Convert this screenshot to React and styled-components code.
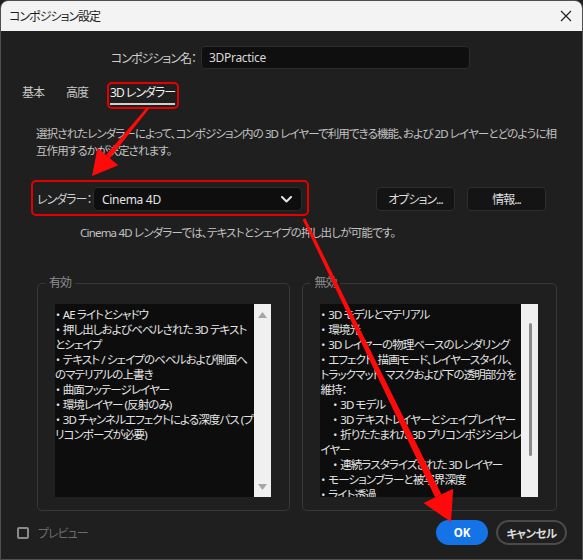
import React from 'react';
import styled, { createGlobalStyle } from 'styled-components';

const GlobalStyle = createGlobalStyle`
  html, body {
    margin: 0;
    padding: 0;
    background: #1f1f1f;
  }
  body {
    font-family: "Noto Sans", "Noto Sans CJK JP", sans-serif;
    font-feature-settings: "palt";
  }
`;

const enabledLines = [
  { text: '・AE ライトとシャドウ' },
  { text: '・押し出しおよびベベルされた 3D テキスト' },
  { text: 'とシェイプ' },
  { text: '・テキスト / シェイプのベベルおよび側面へ' },
  { text: 'のマテリアルの上書き' },
  { text: '・曲面フッテージレイヤー' },
  { text: '・環境レイヤー (反射のみ)' },
  { text: '・3D チャンネルエフェクトによる深度パス (プ' },
  { text: 'リコンポーズが必要)' },
];

const disabledLines = [
  { text: '・3D モデルとマテリアル' },
  { text: '・環境光' },
  { text: '・3D レイヤーの物理ベースのレンダリング' },
  { text: '・エフェクト、描画モード、レイヤースタイル、' },
  { text: 'トラックマット、マスクおよび下の透明部分を' },
  { text: '維持：' },
  { text: '・3D モデル', indent: true },
  { text: '・3D テキストレイヤーとシェイプレイヤー', indent: true },
  { text: '・折りたたまれた 3D プリコンポジションレ', indent: true },
  { text: 'イヤー' },
  { text: '・連続ラスタライズされた 3D レイヤー', indent: true },
  { text: '・モーションブラーと被写界深度' },
  { text: '・ライト透過' },
];

// tapered arrow: thin at the start, wide head at the tip
const arrowPoints = (x1, y1, x2, y2, startW, endW, headLen, headW) => {
  const len = Math.hypot(x2 - x1, y2 - y1);
  const dx = (x2 - x1) / len;
  const dy = (y2 - y1) / len;
  const px = -dy;
  const py = dx;
  const bx = x2 - dx * headLen;
  const by = y2 - dy * headLen;
  const shaft = [
    [x1 + px * startW / 2, y1 + py * startW / 2],
    [bx + px * endW / 2, by + py * endW / 2],
    [bx - px * endW / 2, by - py * endW / 2],
    [x1 - px * startW / 2, y1 - py * startW / 2],
  ];
  const head = [
    [bx + px * headW / 2, by + py * headW / 2],
    [x2, y2],
    [bx - px * headW / 2, by - py * headW / 2],
  ];
  const fmt = (pts) => pts.map(([a, b]) => `${a.toFixed(1)},${b.toFixed(1)}`).join(' ');
  return { shaft: fmt(shaft), head: fmt(head) };
};

const arrowOne = arrowPoints(148, 108, 92, 176, 2.5, 5, 25, 27);
const arrowTwo = arrowPoints(304, 219, 451, 522, 3, 7, 29, 33);

const ListLine = ({ line }) => {
  const bullet = line.text.startsWith('・');
  return (
    <Line $indent={line.indent}>
      {bullet && <Bullet>・</Bullet>}
      {bullet ? line.text.slice(1) : line.text}
    </Line>
  );
};

const App = () => {
  return (
    <>
      <GlobalStyle />
      <Dialog>
        <TitleBar>
          <Title>コンポジション設定</Title>
          <CloseIcon width="12" height="12" viewBox="0 0 12 12">
            <path d="M1 1 L11 11 M11 1 L1 11" stroke="#1b1b1b" strokeWidth="1.1" fill="none" />
          </CloseIcon>
        </TitleBar>

        <Body>
          <NameRow>
            <NameLabel>コンポジション名：</NameLabel>
            <NameInput>3DPractice</NameInput>
          </NameRow>

          <Tabs>
            <Tab>基本</Tab>
            <Tab>高度</Tab>
            <Tab $active>3D レンダラー</Tab>
          </Tabs>

          <Description>
            <div>選択されたレンダラーによって、コンポジション内の 3D レイヤーで利用できる機能、および 2D レイヤーとどのように相</div>
            <div>互作用するかが決定されます。</div>
          </Description>

          <RendererRow>
            <RendererLabel>レンダラー：</RendererLabel>
            <Select>
              <span>Cinema 4D</span>
              <svg width="11" height="7" viewBox="0 0 11 7">
                <path d="M1 1 L5.5 5.5 L10 1" stroke="#e6e6e6" strokeWidth="2" fill="none" strokeLinecap="round" strokeLinejoin="round" />
              </svg>
            </Select>
            <ActionButton $first>オプション...</ActionButton>
            <ActionButton>情報...</ActionButton>
          </RendererRow>

          <Note>Cinema 4D レンダラーでは、テキストとシェイプの押し出しが可能です。</Note>

          <Groups>
            <Group>
              <Caption>有効</Caption>
              <ListBox>
                <ListText>
                  {enabledLines.map((line, i) => (
                    <ListLine key={i} line={line} />
                  ))}
                </ListText>
                <ScrollTrack>
                  <svg width="9" height="6" viewBox="0 0 9 6">
                    <polygon points="0,6 4.5,0 9,6" fill="#a6a6a6" />
                  </svg>
                  <svg width="9" height="6" viewBox="0 0 9 6">
                    <polygon points="0,0 4.5,6 9,0" fill="#a6a6a6" />
                  </svg>
                </ScrollTrack>
              </ListBox>
            </Group>

            <Group>
              <Caption>無効</Caption>
              <ListBox>
                <ListText>
                  {disabledLines.map((line, i) => (
                    <ListLine key={i} line={line} />
                  ))}
                </ListText>
                <ScrollTrack $thin>
                  <Thumb />
                </ScrollTrack>
              </ListBox>
            </Group>
          </Groups>

          <Footer>
            <Preview>
              <CheckBox />
              <PreviewLabel>プレビュー</PreviewLabel>
            </Preview>
            <FooterButtons>
              <OkButton>OK</OkButton>
              <CancelButton>キャンセル</CancelButton>
            </FooterButtons>
          </Footer>
        </Body>

        <Annotations width="583" height="560" viewBox="0 0 583 560">
          <rect x="108" y="83" width="70" height="25" rx="4" fill="none" stroke="#e50000" strokeWidth="2" />
          <rect x="32" y="181" width="276" height="34" rx="4" fill="none" stroke="#e50000" strokeWidth="2" />
          <polygon points={arrowOne.shaft} fill="#ff0a0a" />
          <polygon points={arrowOne.head} fill="#ff0a0a" />
          <polygon points={arrowTwo.shaft} fill="#ff0a0a" />
          <polygon points={arrowTwo.head} fill="#ff0a0a" />
        </Annotations>
      </Dialog>
    </>
  );
};

export default App;

const Dialog = styled.div`
  position: relative;
  width: 583px;
  height: 560px;
  box-sizing: border-box;
  border: 1px solid #4f4f4f;
  border-radius: 8px 8px 0 0;
  overflow: hidden;
  display: flex;
  flex-direction: column;
  background: #1f1f1f;
`;

const TitleBar = styled.div`
  height: 30px;
  flex-shrink: 0;
  background: #f3f3f3;
  display: flex;
  align-items: center;
  justify-content: space-between;
  padding: 0 10px 0 8px;
`;

const Title = styled.span`
  font-size: 12px;
  letter-spacing: -1px;
  color: #1b1b1b;
`;

const CloseIcon = styled.svg`
  display: block;
`;

const Body = styled.div`
  flex: 1;
  display: flex;
  flex-direction: column;
  color: #d6d6d6;
  font-size: 12px;
  letter-spacing: -1px;
  white-space: nowrap;
`;

const NameRow = styled.div`
  display: flex;
  align-items: center;
  gap: 5px;
  margin-top: 15px;
`;

const NameLabel = styled.span`
  width: 195px;
  text-align: right;
  color: #cfcfcf;
`;

const NameInput = styled.div`
  width: 269px;
  height: 23px;
  box-sizing: border-box;
  background: #0f0f0f;
  border: 1px solid #2d2d2d;
  border-radius: 4px;
  padding-left: 7px;
  display: flex;
  align-items: center;
  color: #d8d8d8;
  letter-spacing: -0.3px;
`;

const Tabs = styled.div`
  display: flex;
  gap: 22px;
  padding-left: 21px;
  margin-top: 16px;
`;

const Tab = styled.div`
  line-height: 16px;
  padding-bottom: 2px;
  color: ${(p) => (p.$active ? '#f0f0f0' : '#c8c8c8')};
  border-bottom: 2px solid ${(p) => (p.$active ? '#cfcfcf' : 'transparent')};
`;

const Description = styled.div`
  margin-top: 20px;
  padding-left: 35px;
  line-height: 17px;
  font-size: 11.5px;
  letter-spacing: -0.9px;
  color: #c2c2c2;
`;

const RendererRow = styled.div`
  display: flex;
  align-items: center;
  padding-left: 36px;
  margin-top: 28px;
`;

const RendererLabel = styled.span`
  width: 56px;
  color: #cfcfcf;
`;

const Select = styled.div`
  width: 209px;
  height: 24px;
  box-sizing: border-box;
  background: #0e0e0e;
  border: 1px solid #2b2b2b;
  border-radius: 5px;
  display: flex;
  align-items: center;
  justify-content: space-between;
  padding: 0 9px 0 8px;
  color: #e2e2e2;
  letter-spacing: -0.3px;
`;

const ActionButton = styled.div`
  width: 79px;
  height: 24px;
  box-sizing: border-box;
  margin-left: ${(p) => (p.$first ? '74px' : '12px')};
  background: #141414;
  border: 1px solid #2e2e2e;
  border-radius: 4px;
  display: flex;
  align-items: center;
  justify-content: center;
  color: #dedede;
`;

const Note = styled.div`
  margin-top: 14px;
  padding-left: 79px;
  line-height: 16px;
  font-size: 11.5px;
  letter-spacing: -0.8px;
  color: #c2c2c2;
`;

const Groups = styled.div`
  display: flex;
  gap: 12px;
  margin-top: 42px;
  padding: 0 25px 0 36px;
`;

const Group = styled.div`
  position: relative;
  flex: 1;
  height: 228px;
  box-sizing: border-box;
  border: 1px solid #383838;
  border-radius: 5px;
  padding: 20px 18px 0 17px;
`;

const Caption = styled.span`
  position: absolute;
  top: -9px;
  left: 7px;
  padding: 0 4px;
  background: #1f1f1f;
  line-height: 16px;
  color: #8e8e8e;
`;

const ListBox = styled.div`
  height: 193px;
  display: flex;
  background: #0d0d0d;
  overflow: hidden;
`;

const ListText = styled.div`
  flex: 1;
  padding-top: 3px;
  overflow: hidden;
`;

const Line = styled.div`
  line-height: 15px;
  font-size: 11.5px;
  letter-spacing: -0.9px;
  color: #e4e4e4;
  padding-left: ${(p) => (p.$indent ? '12px' : '0')};
`;

const Bullet = styled.span`
  letter-spacing: 0;
  padding-right: 2px;
`;

const ScrollTrack = styled.div`
  width: 17px;
  flex-shrink: 0;
  background: #f0f0f0;
  display: flex;
  flex-direction: column;
  align-items: center;
  justify-content: ${(p) => (p.$thin ? 'flex-start' : 'space-between')};
  padding: ${(p) => (p.$thin ? '19px 0 0' : '8px 0 7px')};
  box-sizing: border-box;
`;

const Thumb = styled.div`
  width: 3px;
  height: 133px;
  border-radius: 2px;
  background: #8a8a8a;
  margin-left: 1px;
`;

const Footer = styled.div`
  display: flex;
  align-items: center;
  justify-content: space-between;
  margin-top: 9px;
  padding: 0 15px 0 16px;
`;

const Preview = styled.div`
  display: flex;
  align-items: center;
  gap: 9px;
`;

const CheckBox = styled.div`
  width: 12px;
  height: 12px;
  box-sizing: border-box;
  border: 2px solid #8a8a8a;
  border-radius: 2px;
`;

const PreviewLabel = styled.span`
  color: #6c6c6c;
`;

const FooterButtons = styled.div`
  display: flex;
  gap: 8px;
`;

const OkButton = styled.div`
  width: 52px;
  height: 25px;
  border-radius: 13px;
  background: #1473e6;
  color: #ffffff;
  font-weight: 700;
  font-size: 11.5px;
  letter-spacing: 0;
  display: flex;
  align-items: center;
  justify-content: center;
`;

const CancelButton = styled.div`
  width: 71px;
  height: 25px;
  box-sizing: border-box;
  border-radius: 13px;
  border: 2px solid #4a4a4a;
  color: #dcdcdc;
  font-weight: 700;
  font-size: 11.5px;
  letter-spacing: -0.6px;
  display: flex;
  align-items: center;
  justify-content: center;
`;

const Annotations = styled.svg`
  position: absolute;
  top: -1px;
  left: -1px;
  pointer-events: none;
`;
